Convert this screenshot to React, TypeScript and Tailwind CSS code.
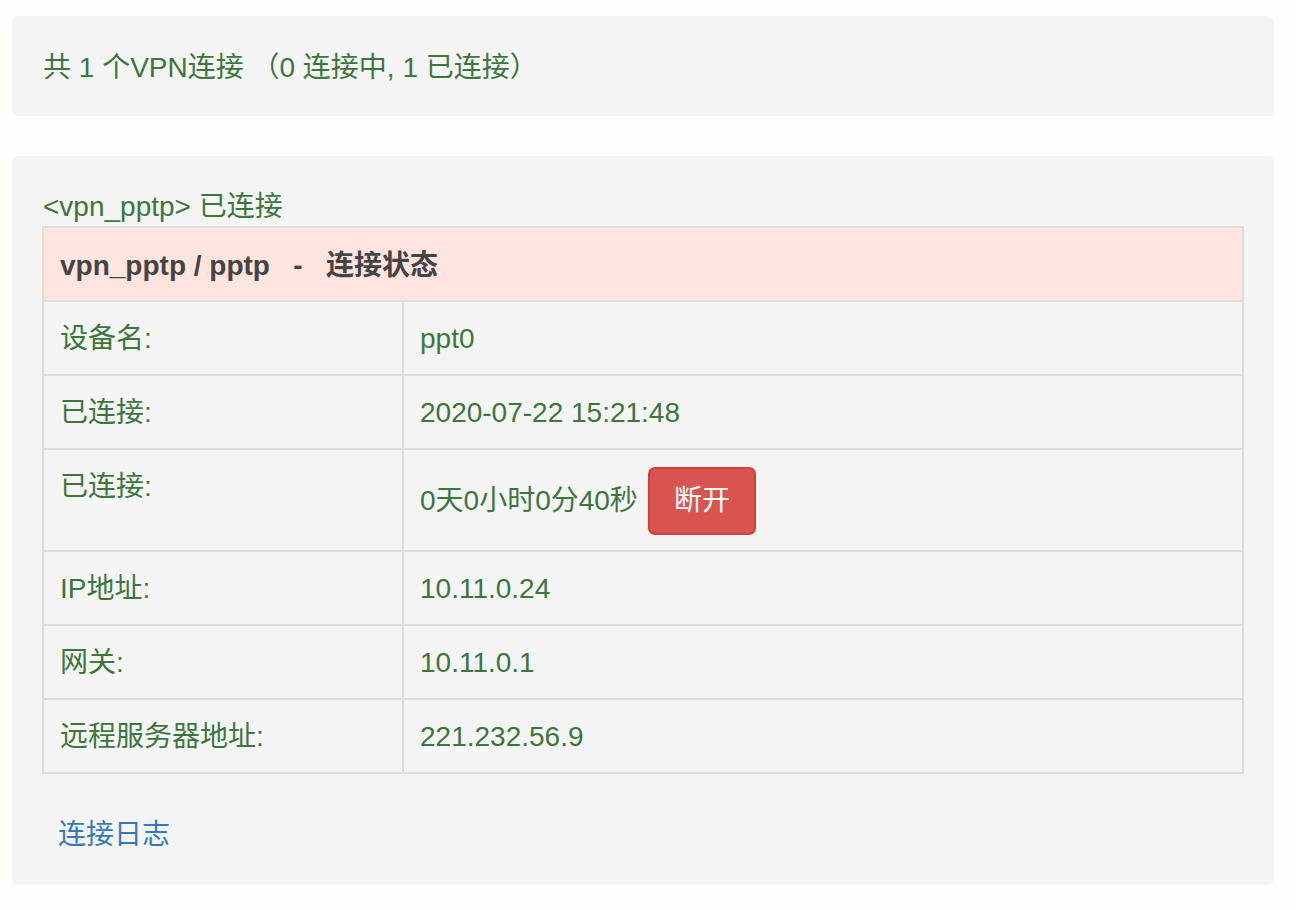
const rows: { label: string; value: string; action?: boolean }[] = [
  { label: '设备名:', value: 'ppt0' },
  { label: '已连接:', value: '2020-07-22 15:21:48' },
  { label: '已连接:', value: '0天0小时0分40秒', action: true },
  { label: 'IP地址:', value: '10.11.0.24' },
  { label: '网关:', value: '10.11.0.1' },
  { label: '远程服务器地址:', value: '221.232.56.9' },
]

export default function App() {
  return (
    <div
      className="min-h-[910px] bg-[#fefefa] pt-4 pl-3 pr-[22px] text-[28px] leading-[40px] text-[#3c763d]"
      style={{ fontFamily: '"Liberation Sans", "Noto Sans CJK SC", sans-serif' }}
    >
      {/* Summary */}
      <div className="rounded-md bg-[#f4f4f5] px-[31px] pt-8 pb-7">
        共 1 个VPN连接 （0 连接中, 1 已连接）
      </div>

      {/* Connection panel */}
      <div className="mt-10 rounded-md bg-[#f4f4f5] px-[30px] pt-8 pb-[30px]">
        <div className="pl-px leading-[38px]">&lt;vpn_pptp&gt; 已连接</div>
        <table className="w-full border-collapse border-2 border-[#dddddd]">
          <thead>
            <tr>
              <th
                colSpan={2}
                className="whitespace-pre border-2 border-[#dddddd] bg-[#fee4de] px-4 pt-[18px] pb-[14px] text-left font-bold text-[#444444]"
              >
                {'vpn_pptp / pptp   -   连接状态'}
              </th>
            </tr>
          </thead>
          <tbody>
            {rows.map((row, i) => (
              <tr key={i}>
                <td className="w-[360px] border-2 border-[#dddddd] px-4 pt-[17px] pb-[15px] align-top">{row.label}</td>
                <td className="border-2 border-[#dddddd] px-4 pt-[17px] pb-[15px] align-top">
                  {row.value}
                  {row.action && (
                    <button className="ml-[10px] h-[68px] rounded-[7px] border-2 border-[#d43f3a] bg-[#d9534f] px-6 text-white">
                      断开
                    </button>
                  )}
                </td>
              </tr>
            ))}
          </tbody>
        </table>
        <div className="mt-[41px] pl-4">
          <a href="#" className="text-[#337ab7]">
            连接日志
          </a>
        </div>
      </div>
    </div>
  )
}
